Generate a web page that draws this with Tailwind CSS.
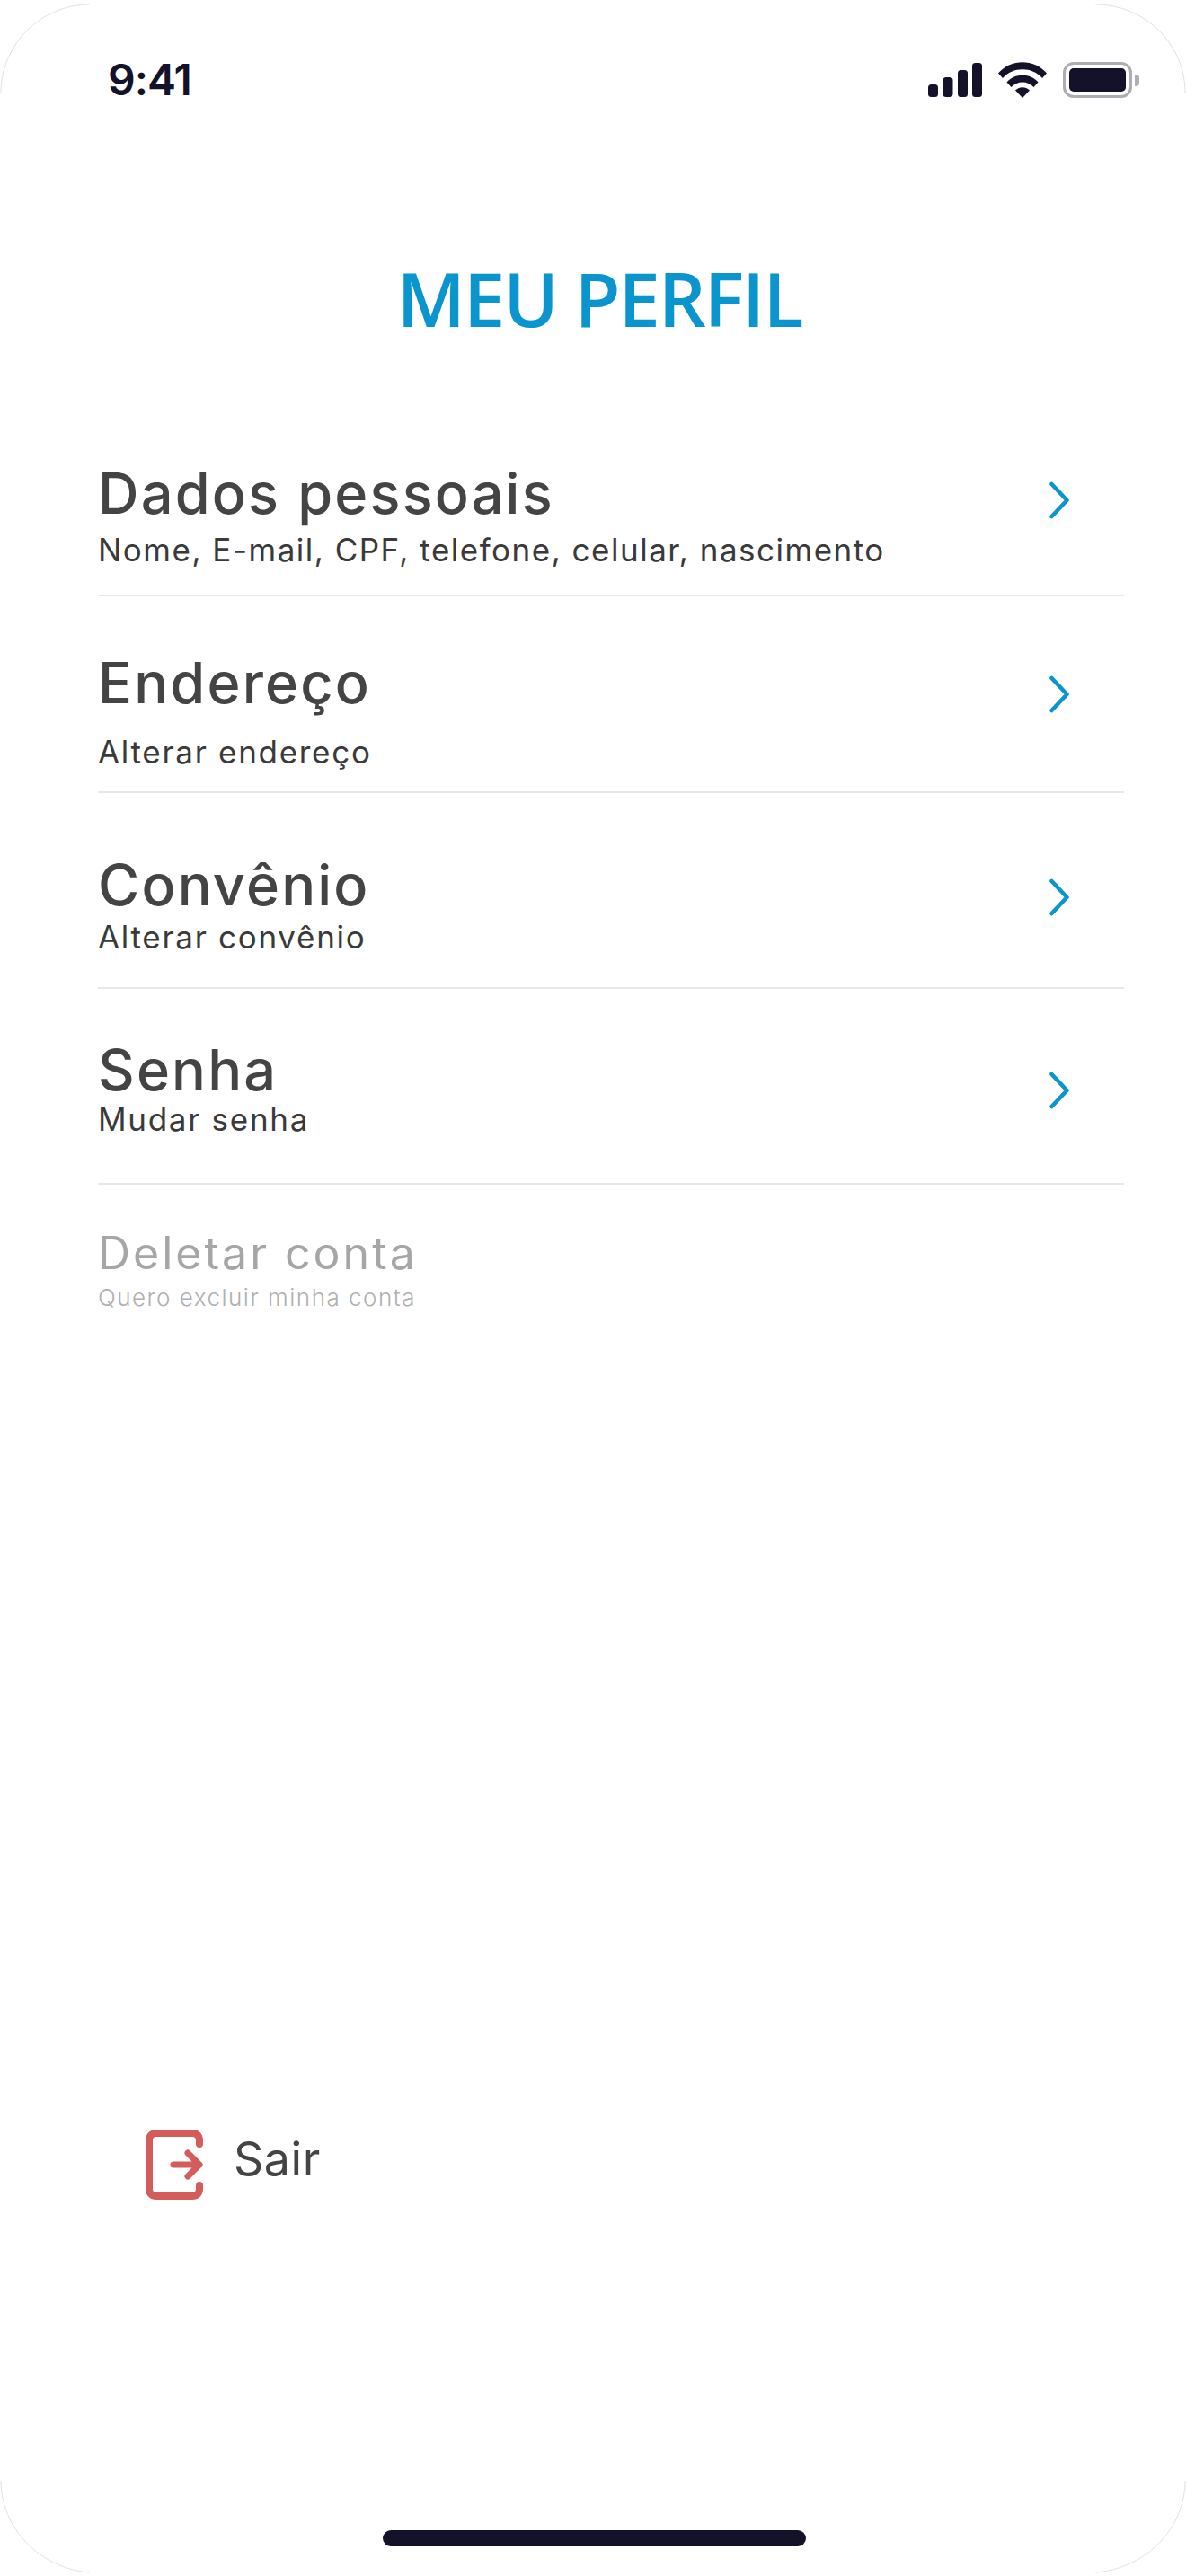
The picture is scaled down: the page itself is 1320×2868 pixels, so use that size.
<!DOCTYPE html>
<html lang="pt-BR">
<head>
  <meta charset="UTF-8">
  <title>Meu Perfil</title>
  <script src="https://cdn.jsdelivr.net/npm/@tailwindcss/browser@4"></script>
</head>
<body class="bg-white">
  <div class="relative flex flex-col h-[2868px] w-[1320px] overflow-hidden bg-white font-['Inter',sans-serif] text-[#444444]">
    <!-- device outline, only the corners show -->
    <svg class="absolute inset-0 pointer-events-none" width="1320" height="2868" fill="none" stroke="#e2e2e6" stroke-width="1">
      <path d="M1 103C1 50 45 5 100 5"/>
      <path d="M1219 5C1275 5 1319 50 1319 103"/>
      <path d="M1 2762C1 2815 45 2860 100 2864"/>
      <path d="M1219 2864C1275 2860 1319 2815 1319 2762"/>
    </svg>

    <!-- status bar -->
    <div class="flex items-center justify-between h-[66px] mt-[56px] pl-[120px] pr-[52px] text-[#14112a]">
      <span class="text-[48px] leading-none font-semibold tracking-[-1px]">9:41</span>
      <div class="flex items-center">
        <svg width="60" height="38" viewBox="0 0 60 38" fill="#14112a">
          <rect x="0" y="24" width="11" height="14" rx="3.5"/>
          <rect x="16.5" y="16" width="11" height="22" rx="3.5"/>
          <rect x="33" y="8" width="11" height="30" rx="3.5"/>
          <rect x="49" y="0" width="11" height="38" rx="3.5"/>
        </svg>
        <svg class="ml-[18px]" width="54" height="40" viewBox="0 0 54 40" fill="#14112a">
          <path d="M0 12.5C14 -4 40 -4 54 12.5L49 18C38 5 16 5 5 18Z"/>
          <path d="M9.5 22.5C18 12 36 12 44.5 22.5L39.5 28C33 20.5 21 20.5 14.5 28Z"/>
          <path d="M19 31.5C23.5 27 30.5 27 35 31.5L27 40Z"/>
        </svg>
        <div class="ml-[18px] flex items-center">
          <div class="w-[77px] h-[40px] rounded-[12px] border-[3px] border-[#aeadb5] p-[4px]">
            <div class="w-full h-full rounded-[5px] bg-[#14112a]"></div>
          </div>
          <div class="ml-[3px] w-[5px] h-[13px] rounded-r-[4px] bg-[#aeadb5]"></div>
        </div>
      </div>
    </div>

    <h1 class="mt-[160px] pl-[14px] text-center text-[83px] leading-[100px] font-semibold tracking-[-2px] font-['Open_Sans',sans-serif] text-[#0a95cf]">MEU PERFIL</h1>

    <!-- menu -->
    <div class="mt-[119px] ml-[109px] w-[1142px]">
      <a class="flex justify-between h-[163px] border-b-2 border-[#e8e8e8]">
        <div class="pt-[16px]">
          <div class="text-[63px] leading-[64px] font-medium tracking-[2.2px]">Dados pessoais</div>
          <div class="mt-[9px] text-[35px] leading-[44px] text-[#3a3a3a] tracking-[1.5px]">Nome, E-mail, CPF, telefone, celular, nascimento</div>
        </div>
        <svg class="mt-[35px] mr-[61px]" width="22" height="42" viewBox="0 0 22 42" fill="none" stroke="#0a95cf" stroke-width="4.5" stroke-linecap="round" stroke-linejoin="round"><path d="M2.5 3L19.5 21L2.5 39"/></svg>
      </a>
      <a class="flex justify-between h-[219px] border-b-2 border-[#e8e8e8]">
        <div class="pt-[64px]">
          <div class="text-[63px] leading-[64px] font-medium tracking-[2.2px]">Endereço</div>
          <div class="mt-[23px] text-[35px] leading-[44px] text-[#3a3a3a] tracking-[1.7px]">Alterar endereço</div>
        </div>
        <svg class="mt-[88px] mr-[61px]" width="22" height="42" viewBox="0 0 22 42" fill="none" stroke="#0a95cf" stroke-width="4.5" stroke-linecap="round" stroke-linejoin="round"><path d="M2.5 3L19.5 21L2.5 39"/></svg>
      </a>
      <a class="flex justify-between h-[218px] border-b-2 border-[#e8e8e8]">
        <div class="pt-[70px]">
          <div class="text-[63px] leading-[64px] font-medium tracking-[2.2px]">Convênio</div>
          <div class="mt-[4px] text-[35px] leading-[44px] text-[#3a3a3a] tracking-[1.7px]">Alterar convênio</div>
        </div>
        <svg class="mt-[95px] mr-[61px]" width="22" height="42" viewBox="0 0 22 42" fill="none" stroke="#0a95cf" stroke-width="4.5" stroke-linecap="round" stroke-linejoin="round"><path d="M2.5 3L19.5 21L2.5 39"/></svg>
      </a>
      <a class="flex justify-between h-[218px] border-b-2 border-[#e8e8e8]">
        <div class="pt-[58px]">
          <div class="text-[63px] leading-[64px] font-medium tracking-[2.2px]">Senha</div>
          <div class="mt-[1px] text-[35px] leading-[44px] text-[#3a3a3a] tracking-[1.7px]">Mudar senha</div>
        </div>
        <svg class="mt-[92px] mr-[61px]" width="22" height="42" viewBox="0 0 22 42" fill="none" stroke="#0a95cf" stroke-width="4.5" stroke-linecap="round" stroke-linejoin="round"><path d="M2.5 3L19.5 21L2.5 39"/></svg>
      </a>
      <a class="block pt-[46px]">
        <div class="text-[50px] leading-[60px] tracking-[3px] text-[#a6a6a6]">Deletar conta</div>
        <div class="mt-[3px] text-[26px] leading-[34px] font-light tracking-[1.5px] text-[#b0b0b0]">Quero excluir minha conta</div>
      </a>
    </div>

    <!-- sair -->
    <a class="mt-auto mb-[368px] ml-[162px] flex items-center">
      <svg width="64" height="78" viewBox="0 0 64 78" fill="none" stroke="#d45c5a" stroke-width="8" stroke-linecap="round" stroke-linejoin="round">
        <path d="M60 16V12C60 7 57 4 52 4H12C7 4 4 7 4 12V66C4 71 7 74 12 74H52C57 74 60 71 60 66V62"/>
        <path stroke-width="7" d="M31 39H60M47 26L60 39L47 52"/>
      </svg>
      <span class="ml-[34px] mb-[12px] text-[52px] leading-none tracking-[0.5px]">Sair</span>
    </a>

    <div class="mb-[33px] ml-[426px] w-[471px] h-[18px] rounded-full bg-[#14112a]"></div>
  </div>
</body>
</html>
